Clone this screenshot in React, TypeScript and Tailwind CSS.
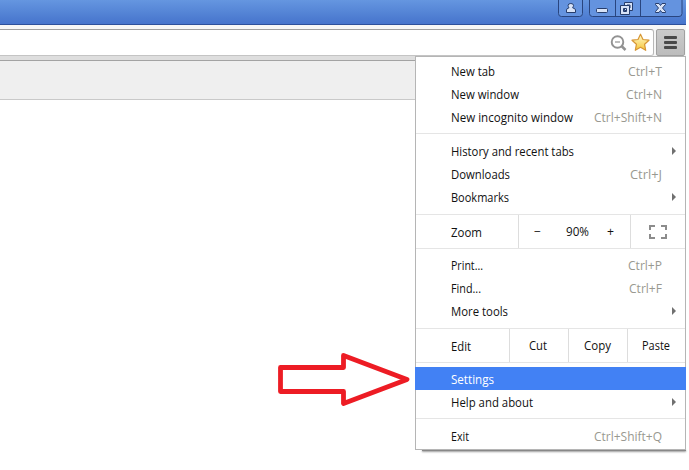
import type { ReactNode } from "react";

function Fit({ text, width }: { text: string; width: number }) {
  return (
    <svg width={width} height="23" className="block shrink-0 overflow-visible">
      <text x="0" y="16" fontSize="12" textLength={width} lengthAdjust="spacingAndGlyphs" fill="currentColor">{text}</text>
    </svg>
  );
}

function Row({ text, keys, sub, active, low, width, keysWidth = 35 }: { text: string; keys?: string; sub?: boolean; active?: boolean; low?: boolean; width: number; keysWidth?: number }) {
  return (
    <div className={`flex h-[23px] items-center justify-between ${low ? "pt-[2px]" : ""} ${active ? "relative -mx-px bg-[#4281f4] pl-[36px] text-white" : "pl-[35px]"}`}>
      <Fit text={text} width={width} />
      {keys && <span className="mr-[23px] text-[#999990]"><Fit text={keys} width={keysWidth} /></span>}
      {sub && (
        <svg className="mr-[9px] -mt-[2px]" width="4" height="8"><path d="M0 0L4 4L0 8Z" fill="#707070" /></svg>
      )}
    </div>
  );
}

function Line() {
  return <div className="h-px bg-[#e5e5e5]" />;
}

function Cell({ children, className }: { children: ReactNode; className: string }) {
  return <div className={`flex h-full items-center ${className}`}>{children}</div>;
}

function TitleButtons() {
  return (
    <svg width="128" height="18" viewBox="0 0 128 18">
      <g fill="#6493df" stroke="#29457f">
        <path d="M.5-1V13.5Q.5 16.5 3.5 16.5H21.5Q24.5 16.5 24.5 13.5V-1" />
        <path d="M31.5-1V13.5Q31.5 16.5 34.5 16.5H121Q124 16.5 124 13.5V-1M57.5 0V16M82.5 0V16" />
      </g>
      <g fill="#d8e3f7" stroke="#263d6c">
        <path d="M8.5 12.5V10Q8.5 8.5 11 7.8Q10.1 6.5 10.1 5.3Q10.3 3.5 12.8 3.5Q15.3 3.5 15.5 5.3Q15.5 6.5 14.6 7.8Q17.5 8.5 17.5 10V12.5Z" />
        <rect x="38.5" y="8.5" width="11" height="4" rx="1" />
        <path fillRule="evenodd" d="M66.5 2.5H74.5V10.5H66.5ZM69 5V8H72V5Z" />
        <path fillRule="evenodd" d="M62.5 5.5H71.5V14.5H62.5ZM65.5 8.5V11.5H68.5V8.5Z" />
        <path d="M97.5 3.5H101L102.5 5.5L104 3.5H107.5V4.5L104.5 8L107.5 11.5V12.5H104L102.5 10.5L101 12.5H97.5V11.5L100.5 8L97.5 4.5Z" />
      </g>
    </svg>
  );
}

export default function App() {
  return (
    <div className="relative h-[470px] w-[689px] overflow-hidden bg-white font-['Open_Sans','Noto_Sans',sans-serif] text-[12px] text-[#111]">
      <div className="w-[686px]">
        <header className="flex h-[25px] justify-end border-b border-[#2d509b] bg-linear-to-b from-[#6596e0] to-[#4674cc]">
          <TitleButtons />
        </header>
        <div className="flex h-[31px] justify-between bg-[#f6f6f6] pt-1">
          <div className="flex h-[27px] w-[654px] items-center justify-end rounded-r-[3px] border-y border-r border-t-[#a0a0a0] border-r-[#b8b8b8] border-b-[#c4c4c4] bg-white pr-[3px]">
            <svg width="17" height="18" viewBox="0 0 17 18" fill="none" stroke="#929292">
              <circle cx="7.5" cy="8" r="5.8" strokeWidth="1.9" /><path d="M5 8H10" strokeWidth="1.2" /><path d="M11.5 12L15.5 16" strokeWidth="2.5" />
            </svg>
            <svg className="ml-[4px]" width="19" height="19" viewBox="0 0 19 19">
              <defs><linearGradient id="gold" x2="0" y2="1"><stop stopColor="#fffbd0" /><stop offset="1" stopColor="#f7c638" /></linearGradient></defs>
              <path d="M9.5 1.2L12 6.5L18 7.2L13.6 11.3L14.7 17.3L9.5 14.3L4.3 17.3L5.4 11.3L1 7.2L7 6.5Z" fill="url(#gold)" stroke="#d79635" strokeWidth="1.2" strokeLinejoin="round" />
            </svg>
          </div>
          <div className="mr-px flex h-[27px] w-[29px] flex-col items-center justify-center gap-[2px] rounded-[2px] border border-[#a0a0a0] bg-linear-to-b from-[#cbcbcb] to-[#bcbcbc]">
            <i className="h-[3px] w-[13px] rounded-[1px] bg-[#494949]" /><i className="h-[3px] w-[13px] rounded-[1px] bg-[#494949]" /><i className="h-[3px] w-[13px] rounded-[1px] bg-[#494949]" />
          </div>
        </div>
        <div className="h-[5px] border-b border-[#a3a3a3] bg-[#dedede]" />
        <div className="h-[39px] border-b border-[#c9c9c9] bg-[#efefef]" />
      </div>

      <svg className="absolute left-[278px] top-[350px]" width="135" height="58" viewBox="0 0 135 58">
        <path d="M2.5 17.5H65.5V5.5L129 29.5L65.5 53.5V41.5H2.5Z" fill="white" stroke="#ed1c24" strokeWidth="4.8" strokeLinejoin="round" />
      </svg>

      <div className="absolute left-[422px] top-[449px] h-[2px] w-[264px] bg-[#888] shadow-[0_1px_2px_#999]" />
      <nav className="absolute left-[415px] top-[56px] h-[394px] w-[271px] border border-[#b5b5b5] bg-white">
        <div className="pb-[4px] pt-[3px]">
          <Row text="New tab" width={44} keys="Ctrl+T" keysWidth={34} />
          <Row text="New window" width={68} keys="Ctrl+N" keysWidth={36} />
          <Row text="New incognito window" width={122} keys="Ctrl+Shift+N" keysWidth={68} />
        </div>
        <Line />
        <div className="pb-[5px] pt-[6px]">
          <Row text="History and recent tabs" width={123} sub />
          <Row text="Downloads" width={59} keys="Ctrl+J" keysWidth={32} />
          <Row text="Bookmarks" width={58} sub />
        </div>
        <Line />
        <div className="flex h-[33px]">
          <Cell className="w-[103px] border-r border-[#ddd] pl-[35px] pt-[2px]"><Fit text="Zoom" width={31} /></Cell>
          <Cell className="w-[112px] border-r border-[#ddd] pl-[15px]">
            <Fit text="−" width={7} /><span className="ml-[25px]"><Fit text="90%" width={23} /></span><span className="ml-[18px]"><Fit text="+" width={7} /></span>
          </Cell>
          <Cell className="flex-1 justify-center">
            <svg width="18" height="14" fill="none" stroke="#8c8c8c" strokeWidth="2"><path d="M1 5V1H6M12 1H17V5M17 9V13H12M6 13H1V9" /></svg>
          </Cell>
        </div>
        <Line />
        <div className="pb-[5px] pt-[5px]">
          <Row text="Print..." width={32} keys="Ctrl+P" keysWidth={34} />
          <Row text="Find..." width={30} keys="Ctrl+F" keysWidth={33} />
          <Row text="More tools" width={57} sub />
        </div>
        <Line />
        <div className="flex h-[33px]">
          <Cell className="w-[94px] border-r border-[#ddd] pl-[35px] pt-[2px]"><Fit text="Edit" width={20} /></Cell>
          <Cell className="w-[59px] border-r border-[#ddd] pl-[19px]"><Fit text="Cut" width={18} /></Cell>
          <Cell className="w-[59px] border-r border-[#ddd] pl-[15px]"><Fit text="Copy" width={27} /></Cell>
          <Cell className="flex-1 pl-[14px]"><Fit text="Paste" width={28} /></Cell>
        </div>
        <Line />
        <div className="pb-[5px] pt-[4px]">
          <Row text="Settings" width={43} active low />
          <Row text="Help and about" width={82} sub low />
        </div>
        <Line />
        <div className="pt-[6px]"><Row text="Exit" width={18} keys="Ctrl+Shift+Q" keysWidth={68} /></div>
      </nav>
    </div>
  );
}
